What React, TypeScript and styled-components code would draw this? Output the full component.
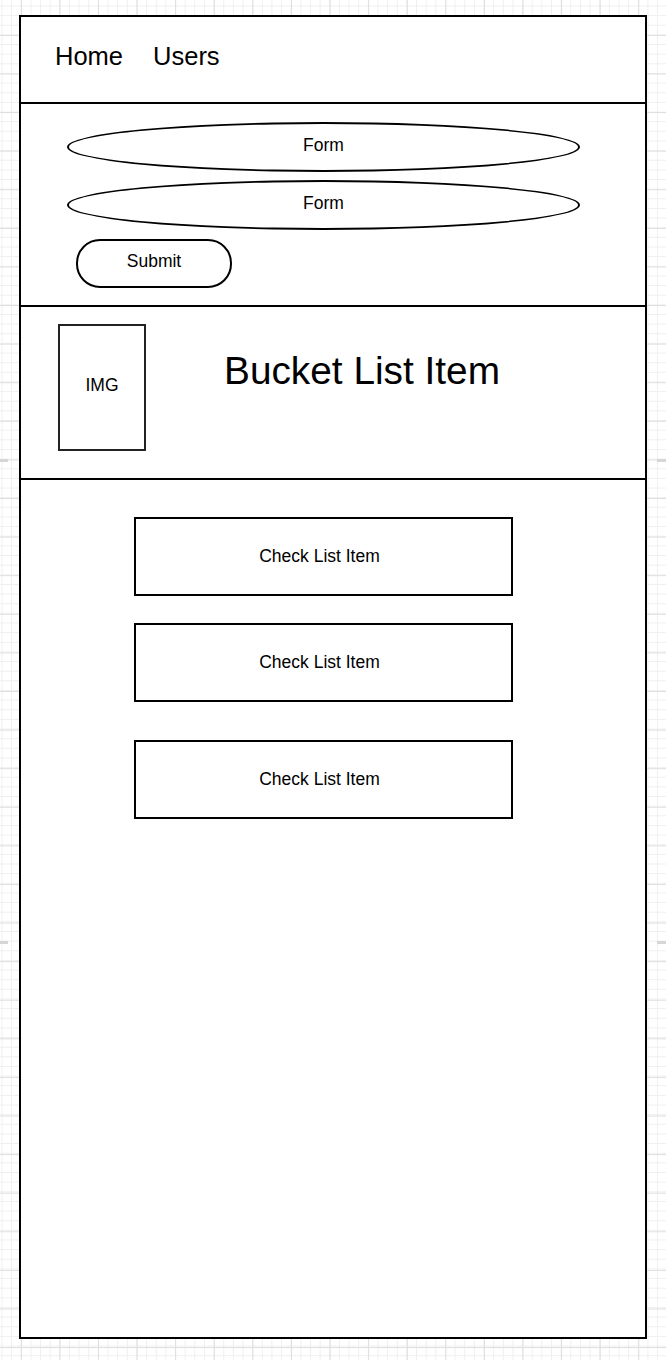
import React from "react";
import styled, { createGlobalStyle } from "styled-components";

const GlobalStyle = createGlobalStyle`
  * {
    box-sizing: border-box;
  }
  html,
  body {
    margin: 0;
    padding: 0;
  }
  body {
    min-height: 1360px;
    font-family: "Liberation Sans", Arial, sans-serif;
    color: #000;
    background-color: #fff;
    background-image:
      linear-gradient(to right, #dedede 1px, transparent 1px),
      linear-gradient(to bottom, #dedede 1px, transparent 1px),
      linear-gradient(to right, #efefef 1px, transparent 1px),
      linear-gradient(to bottom, #efefef 1px, transparent 1px);
    background-size: 38.6px 38.6px, 38.6px 38.6px, 9.65px 9.65px, 9.65px 9.65px;
    background-position: 20.8px 0, 0 34.9px, 1.5px 0, 0 5.5px;
  }
`;

const Canvas = styled.div`
  position: relative;
  width: 666px;
  height: 1360px;
  padding: 15px 0 0 19px;
`;

// draw.io page break marks on the canvas edges
const PageMark = styled.div<{ $top: number; $side: "left" | "right" }>`
  position: absolute;
  top: ${(p) => p.$top}px;
  ${(p) => (p.$side === "left" ? "left: 0;" : "right: 0;")}
  width: ${(p) => (p.$side === "left" ? 8 : 9)}px;
  height: 3px;
  background: #d6d6d6;
`;

const Frame = styled.div`
  width: 628px;
  height: 1324px;
  border: 2px solid #000;
  background: #fff;
  display: flex;
  flex-direction: column;
`;

const NavBar = styled.nav`
  height: 87px;
  border-bottom: 2px solid #000;
  display: flex;
  align-items: flex-start;
  gap: 30px;
  padding: 27px 0 0 34px;
`;

const NavLink = styled.a`
  font-size: 25.5px;
  line-height: 1;
  color: #000;
  text-decoration: none;
`;

const FormSection = styled.section`
  height: 203px;
  border-bottom: 2px solid #000;
  display: flex;
  flex-direction: column;
  align-items: flex-start;
  padding: 18px 0 0 46px;
`;

const FormField = styled.div<{ $last?: boolean }>`
  width: 513px;
  height: 50px;
  border: 2px solid #000;
  border-radius: 50%;
  display: flex;
  align-items: center;
  justify-content: center;
  font-size: 17.5px;
  padding-bottom: 3px;
  margin-bottom: ${(p) => (p.$last ? 9 : 8)}px;
`;

const SubmitButton = styled.button`
  width: 156px;
  height: 49px;
  margin-left: 9px;
  border: 2px solid #000;
  border-radius: 24px;
  background: #fff;
  font-family: "Liberation Sans", Arial, sans-serif;
  font-size: 17.5px;
  color: #000;
  padding: 0 0 4px 0;
`;

const BucketSection = styled.section`
  height: 173px;
  border-bottom: 2px solid #000;
  display: flex;
  align-items: flex-start;
  padding: 17px 0 0 37px;
`;

const ImageBox = styled.div`
  width: 88px;
  height: 127px;
  border: 2px solid #222;
  display: flex;
  align-items: center;
  justify-content: center;
  font-size: 17.5px;
  padding-bottom: 4px;
`;

const BucketTitle = styled.h1`
  margin: 28px 0 0 78px;
  font-size: 38.8px;
  font-weight: normal;
  line-height: 1;
`;

const CheckSection = styled.section`
  flex: 1;
  display: flex;
  flex-direction: column;
  padding-left: 113px;
`;

const CheckItem = styled.div<{ $gap: number }>`
  width: 379px;
  height: 79px;
  margin-top: ${(p) => p.$gap}px;
  border: 2px solid #000;
  display: flex;
  align-items: center;
  justify-content: center;
  padding-right: 8px;
  font-size: 17.5px;
`;

const checkGaps = [37, 27, 38];

const App = () => {
  return (
    <>
      <GlobalStyle />
      <Canvas>
        <PageMark $top={459} $side="left" />
        <PageMark $top={459} $side="right" />
        <PageMark $top={941} $side="left" />
        <PageMark $top={941} $side="right" />
        <Frame>
          <NavBar>
            <NavLink href="#">Home</NavLink>
            <NavLink href="#">Users</NavLink>
          </NavBar>
          <FormSection>
            <FormField>Form</FormField>
            <FormField $last>Form</FormField>
            <SubmitButton>Submit</SubmitButton>
          </FormSection>
          <BucketSection>
            <ImageBox>IMG</ImageBox>
            <BucketTitle>Bucket List Item</BucketTitle>
          </BucketSection>
          <CheckSection>
            {checkGaps.map((gap, i) => (
              <CheckItem key={i} $gap={gap}>
                Check List Item
              </CheckItem>
            ))}
          </CheckSection>
        </Frame>
      </Canvas>
    </>
  );
};

export default App;
